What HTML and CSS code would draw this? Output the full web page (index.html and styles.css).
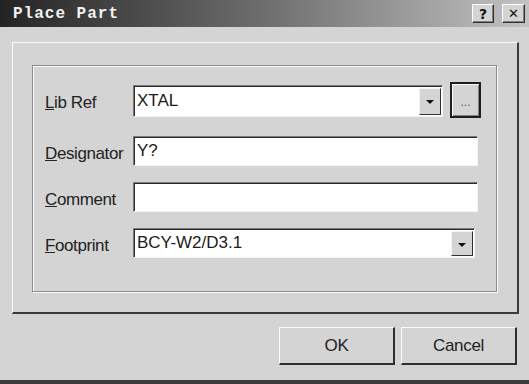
FILE: index.html
```html
<!DOCTYPE html>
<html lang="en">
<head>
    <meta charset="UTF-8">
    <title>Place Part</title>
    <link rel="stylesheet" href="styles.css">
</head>
<body>
    <div class="window">
        <div class="titlebar">
            <span class="title">Place Part</span>
            <button class="cap-btn">?</button>
            <button class="cap-btn close">&#x2715;</button>
        </div>

        <div class="panel">
            <div class="group">
                <div class="row row-first">
                    <label class="label"><u>L</u>ib Ref</label>
                    <div class="field combo lib">
                        <span class="value">XTAL</span>
                        <span class="drop"><i class="arrow"></i></span>
                    </div>
                    <button class="browse"><span class="dots">...</span></button>
                </div>
                <div class="row">
                    <label class="label"><u>D</u>esignator</label>
                    <div class="field text"><span class="value">Y?</span></div>
                </div>
                <div class="row">
                    <label class="label"><u>C</u>omment</label>
                    <div class="field text"><span class="value"></span></div>
                </div>
                <div class="row">
                    <label class="label"><u>F</u>ootprint</label>
                    <div class="field combo foot">
                        <span class="value">BCY-W2/D3.1</span>
                        <span class="drop"><i class="arrow"></i></span>
                    </div>
                </div>
            </div>
        </div>

        <div class="actions">
            <button class="btn">OK</button>
            <button class="btn">Cancel</button>
        </div>
    </div>
</body>
</html>
```

FILE: styles.css
```css
body {
    margin: 0;
    width: 529px;
    height: 384px;
    overflow: hidden;
    background-color: #d4d4d4;
    font-family: "Liberation Sans", Arial, sans-serif;
    color: #1c1c1c;
}

.window {
    height: 384px;
    box-sizing: border-box;
    border-bottom: 4px solid #3c3c3c;
    display: flex;
    flex-direction: column;
}

/* title bar */
.titlebar {
    height: 27px;
    display: flex;
    align-items: center;
    padding: 0 4px 0 13px;
    background: linear-gradient(to right, #242424, #6e6e6e 50%, #c2c2c2);
}

.title {
    flex: 1;
    font-family: "Liberation Mono", monospace;
    font-weight: bold;
    font-size: 16px;
    letter-spacing: 1px;
    color: #f2f2f2;
}

.cap-btn {
    width: 22px;
    height: 19px;
    padding: 0;
    margin-left: 8px;
    background-color: #d4d4d4;
    border: 1px solid;
    border-color: #fff #303030 #303030 #fff;
    box-shadow: inset -1px -1px 0 #808080;
    font-family: "DejaVu Sans", sans-serif;
    font-weight: bold;
    font-size: 14px;
    line-height: 16px;
    color: #111;
}

.cap-btn.close {
    width: 23px;
    font-size: 13px;
}

/* main panel */
.panel {
    height: 272px;
    margin: 15px 10px 0 12px;
    box-sizing: border-box;
    padding: 22px 20px 20px 19px;
    border-style: solid;
    border-width: 1px 2px 2px 1px;
    border-color: #fafafa #3a3a3a #3a3a3a #fafafa;
    display: flex;
}

.group {
    flex: 1;
    border: 1px solid #8c8c8c;
    box-shadow: inset 1px 1px 0 #fafafa, 1px 1px 0 #fafafa;
    padding: 16px 0 0 12px;
    display: flex;
    flex-direction: column;
    gap: 16px;
}

.row {
    display: flex;
    align-items: center;
    height: 30px;
}

.row-first {
    height: 36px;
    margin-bottom: 2px;
}

.label {
    width: 88px;
    font-size: 17px;
    letter-spacing: -0.4px;
    padding-top: 6px;
    color: #222;
}

.field {
    height: 30px;
    box-sizing: border-box;
    background-color: #fff;
    border: 1px solid;
    border-color: #7a7a7a #f4f4f4 #f4f4f4 #7a7a7a;
    box-shadow: inset 1px 1px 0 #2a2a2a;
    display: flex;
    align-items: center;
    font-size: 17px;
}

.field .value {
    flex: 1;
    padding-left: 3px;
}

.text {
    width: 345px;
}

.combo.lib {
    width: 310px;
    height: 32px;
    margin-top: 1px;
}

.combo.lib .value {
    align-self: flex-start;
    padding-top: 5px;
}

.combo.foot {
    width: 342px;
}

.drop {
    width: 22px;
    align-self: stretch;
    margin: 2px 1px 1px 0;
    box-sizing: border-box;
    background-color: #d4d4d4;
    border: 1px solid;
    border-color: #f4f4f4 #303030 #303030 #f4f4f4;
    display: flex;
    align-items: center;
    justify-content: center;
}

.arrow {
    width: 0;
    height: 0;
    border-left: 4px solid transparent;
    border-right: 4px solid transparent;
    border-top: 4px solid #111;
    margin-top: 2px;
}

.browse {
    width: 31px;
    height: 36px;
    margin-left: 7px;
    padding: 0;
    box-sizing: border-box;
    background-color: #d4d4d4;
    border: 2px solid #1e1e1e;
    box-shadow: inset 1px 1px 0 #fafafa, inset -1px -1px 0 #808080;
    display: flex;
    align-items: flex-end;
    justify-content: center;
}

.dots {
    font-size: 12px;
    line-height: 11px;
    color: #555;
    margin-bottom: 8px;
}

/* buttons */
.actions {
    display: flex;
    justify-content: flex-end;
    gap: 6px;
    margin-top: 13px;
    padding-right: 12px;
}

.btn {
    width: 116px;
    height: 38px;
    background-color: #d4d4d4;
    border-style: solid;
    border-width: 1px 2px 2px 1px;
    border-color: #fafafa #2e2e2e #2e2e2e #fafafa;
    font-family: "Liberation Sans", Arial, sans-serif;
    font-size: 17px;
    letter-spacing: -0.3px;
    color: #222;
}
```
